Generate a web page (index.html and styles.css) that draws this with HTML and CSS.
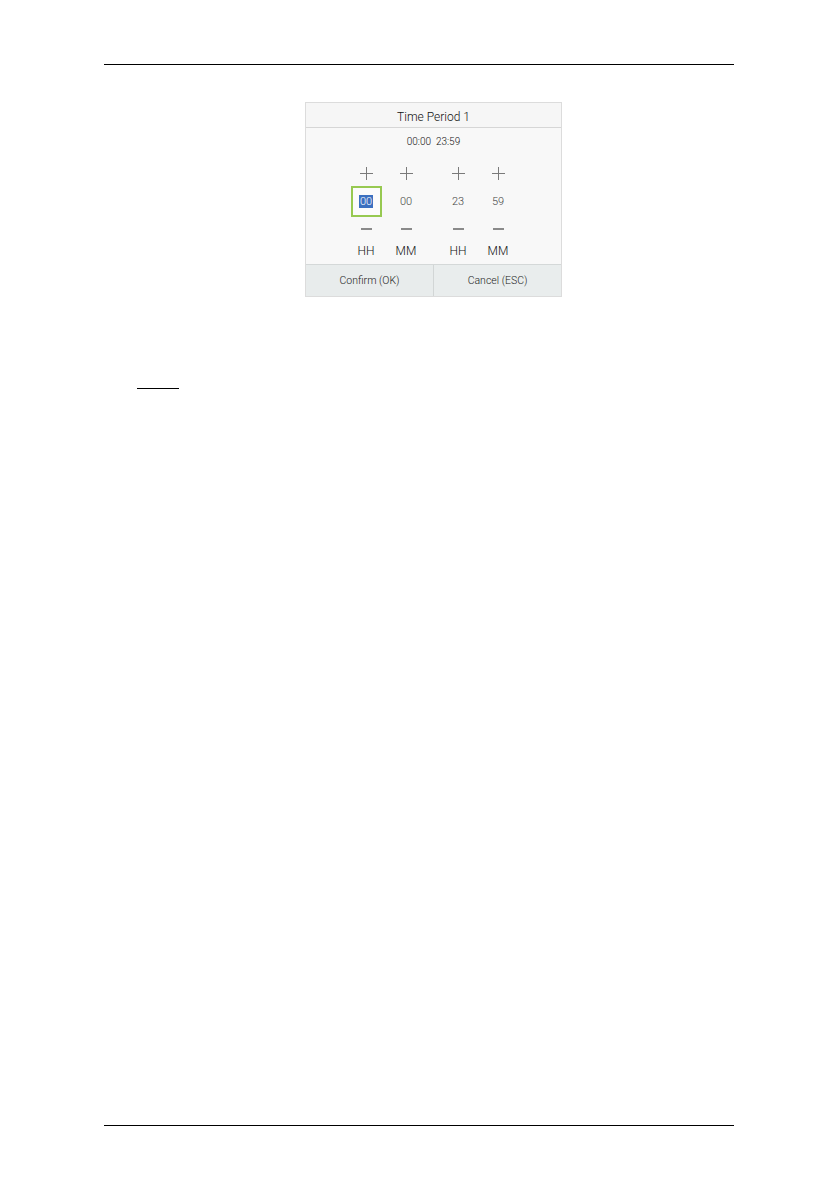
FILE: index.html
```html
<!DOCTYPE html>
<html>
<head>
<meta charset="utf-8">
<link rel="stylesheet" href="styles.css">
</head>
<body>
<div class="page">
  <div class="rule top-rule"></div>
  <div class="dialog">
    <div class="dlg-title">Time Period 1</div>
    <div class="dlg-range">00:00&nbsp;&nbsp;23:59</div>
    <div class="picker">
      <div class="group">
        <div class="col">
          <div class="pm plus"></div>
          <div class="val selected"><span class="sel-text">00</span></div>
          <div class="pm minus"></div>
          <div class="lbl">HH</div>
        </div>
        <div class="col">
          <div class="pm plus"></div>
          <div class="val">00</div>
          <div class="pm minus"></div>
          <div class="lbl">MM</div>
        </div>
      </div>
      <div class="group">
        <div class="col">
          <div class="pm plus"></div>
          <div class="val">23</div>
          <div class="pm minus"></div>
          <div class="lbl">HH</div>
        </div>
        <div class="col">
          <div class="pm plus"></div>
          <div class="val">59</div>
          <div class="pm minus"></div>
          <div class="lbl">MM</div>
        </div>
      </div>
    </div>
    <div class="buttons">
      <div class="btn">Confirm (OK)</div>
      <div class="btn">Cancel (ESC)</div>
    </div>
  </div>
  <div class="note-line"></div>
  <div class="spacer"></div>
  <div class="rule bottom-rule"></div>
</div>
</body>
</html>
```

FILE: styles.css
```css
html, body {
  margin: 0;
  padding: 0;
  background: #ffffff;
}
body {
  font-family: Roboto, "Liberation Sans", Arial, sans-serif;
  color: #333;
}
.page {
  width: 839px;
  height: 1190px;
  padding-top: 64px;
  box-sizing: border-box;
  display: flex;
  flex-direction: column;
}
.rule {
  margin-left: 104px;
  width: 630px;
  height: 1px;
  background: #000;
  flex: none;
}
.dialog {
  margin-top: 37px;
  margin-left: 305px;
  width: 257px;
  height: 195px;
  box-sizing: border-box;
  border: 1px solid #dcdcdc;
  background: #f8f8f8;
  display: flex;
  flex-direction: column;
  flex: none;
}
.dlg-title {
  height: 24px;
  line-height: 28px;
  border-bottom: 1px solid #d6d6d6;
  background: #f6f6f6;
  text-align: center;
  font-size: 12px;
  font-weight: 300;
  color: #111;
  flex: none;
}
.dlg-range {
  height: 26px;
  line-height: 27px;
  text-align: center;
  font-size: 10px;
  font-weight: 300;
  color: #111;
  flex: none;
}
.picker {
  display: flex;
  gap: 12px;
  margin-left: 40px;
  padding-top: 10px;
  height: 110px;
  box-sizing: border-box;
  flex: none;
}
.group {
  display: flex;
}
.col {
  width: 40px;
  display: flex;
  flex-direction: column;
  align-items: center;
}
.pm {
  height: 20px;
  width: 40px;
  display: flex;
  align-items: center;
  justify-content: center;
}
.plus {
  position: relative;
}
.plus::before,
.plus::after {
  content: "";
  position: absolute;
  background: #7a7a7a;
}
.plus::before {
  width: 13px;
  height: 1px;
  left: 14px;
  top: 9px;
}
.plus::after {
  width: 1px;
  height: 13px;
  left: 20px;
  top: 3px;
}
.minus::before {
  content: "";
  width: 11px;
  height: 2px;
  background: #8a8a8a;
  display: block;
}
.val {
  height: 31px;
  width: 31px;
  box-sizing: border-box;
  display: flex;
  align-items: center;
  justify-content: center;
  font-size: 11px;
  font-weight: 300;
  color: #444;
  margin: 2px 0 2px;
}
.val.selected {
  border: 2px solid #97c951;
  background: #fbfbfb;
}
.sel-text {
  background: #3c70c0;
  color: #fff;
  line-height: 13px;
  padding: 0 1px;
}
.lbl {
  margin-top: 5px;
  font-size: 12px;
  font-weight: 300;
  color: #111;
  line-height: 14px;
}
.buttons {
  display: flex;
  border-top: 1px solid #d4d8d8;
  flex: 1;
}
.btn {
  flex: 1;
  background: #e8ecec;
  display: flex;
  align-items: center;
  justify-content: center;
  font-size: 10.5px;
  font-weight: 300;
  color: #222;
}
.btn + .btn {
  border-left: 1px solid #d2d6d6;
  background: #e9eded;
}
.note-line {
  margin-top: 91px;
  margin-left: 137px;
  width: 42px;
  height: 1px;
  background: #000;
  flex: none;
}
.spacer {
  height: 736px;
  flex: none;
}
```
